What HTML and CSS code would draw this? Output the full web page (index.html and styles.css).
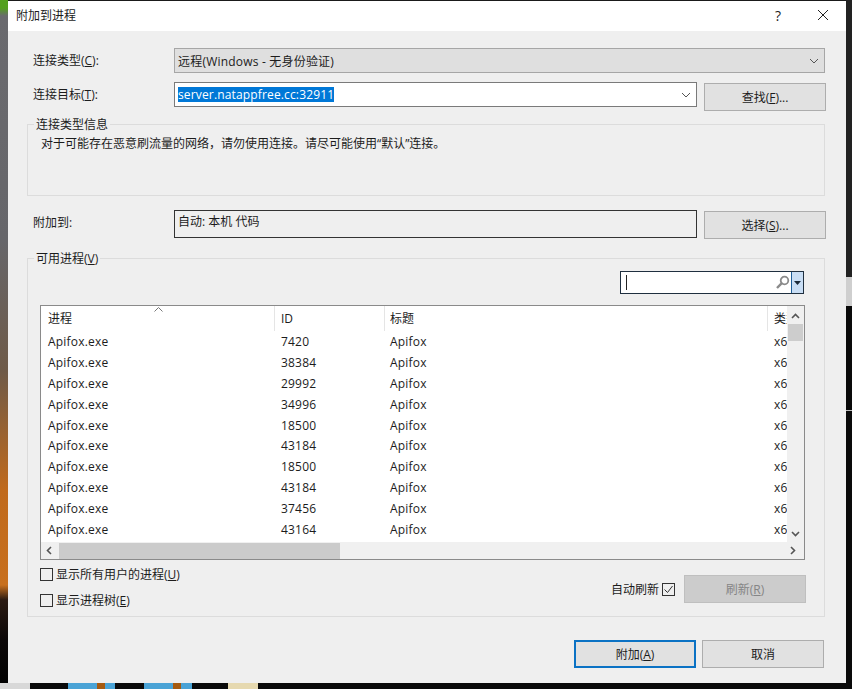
FILE: index.html
```html
<!DOCTYPE html>
<html>
  <head>
    <title>附加到进程</title>
    <link rel="stylesheet" href="styles.css">
  </head>
  <body>
    <div class="dialog">
      <div class="titlebar">
        <span class="title">附加到进程</span>
        <span class="help">?</span>
        <svg class="close" width="12" height="12" viewBox="0 0 12 12"><path d="M1 1l10 10M11 1L1 11" stroke="#222" fill="none"/></svg>
      </div>

      <div class="content">
        <div class="row row-first">
          <label class="row-label">连接类型(<u>C</u>):</label>
          <div class="combo">
            <span class="combo-text">远程(Windows - 无身份验证)</span>
            <svg width="10" height="6" viewBox="0 0 10 6"><path d="M1 1l4 4 4-4" stroke="#555" fill="none"/></svg>
          </div>
        </div>

        <div class="row row-target">
          <label class="row-label">连接目标(<u>T</u>):</label>
          <div class="target">
            <span class="selected">server.natappfree.cc:32911</span>
            <svg width="10" height="6" viewBox="0 0 10 6"><path d="M1 1l4 4 4-4" stroke="#555" fill="none"/></svg>
          </div>
          <button class="btn btn-side">查找(<u>F</u>)...</button>
        </div>

        <fieldset class="group group-info">
          <legend>连接类型信息</legend>
          <p class="info-text">对于可能存在恶意刷流量的网络，请勿使用连接。请尽可能使用“默认”连接。</p>
        </fieldset>

        <div class="row row-attach">
          <label class="row-label">附加到:</label>
          <div class="readonly">自动: 本机 代码</div>
          <button class="btn btn-side">选择(<u>S</u>)...</button>
        </div>

        <fieldset class="group group-proc">
          <legend>可用进程(<u>V</u>)</legend>
          <div class="proc-inner">
            <div class="search-row">
              <div class="search">
                <span class="caret"></span>
                <svg class="search-icon" width="15" height="15" viewBox="0 0 15 15"><circle cx="9.5" cy="5.5" r="3.8" stroke="#8a8a8a" stroke-width="1.8" fill="none"/><path d="M6.8 8.2L2 13" stroke="#8a8a8a" stroke-width="2.4"/></svg>
                <span class="search-drop"><svg width="7" height="4" viewBox="0 0 7 4"><path d="M0 0h7L3.5 4z" fill="#1c2b3a"/></svg></span>
              </div>
            </div>

            <div class="list">
              <div class="list-top">
                <div class="table">
                  <div class="thead">
                    <svg class="sort" width="9" height="5" viewBox="0 0 9 5"><path d="M.5 4.5l4-4 4 4" stroke="#777" fill="none"/></svg>
                    <span class="th">进程</span><span class="th">ID</span><span class="th">标题</span><span class="th th-last">类型</span>
                  </div>
                  <div class="tr"><span>Apifox.exe</span><span>7420</span><span>Apifox</span><span>x64</span></div>
                  <div class="tr"><span>Apifox.exe</span><span>38384</span><span>Apifox</span><span>x64</span></div>
                  <div class="tr"><span>Apifox.exe</span><span>29992</span><span>Apifox</span><span>x64</span></div>
                  <div class="tr"><span>Apifox.exe</span><span>34996</span><span>Apifox</span><span>x64</span></div>
                  <div class="tr"><span>Apifox.exe</span><span>18500</span><span>Apifox</span><span>x64</span></div>
                  <div class="tr"><span>Apifox.exe</span><span>43184</span><span>Apifox</span><span>x64</span></div>
                  <div class="tr"><span>Apifox.exe</span><span>18500</span><span>Apifox</span><span>x64</span></div>
                  <div class="tr"><span>Apifox.exe</span><span>43184</span><span>Apifox</span><span>x64</span></div>
                  <div class="tr"><span>Apifox.exe</span><span>37456</span><span>Apifox</span><span>x64</span></div>
                  <div class="tr"><span>Apifox.exe</span><span>43164</span><span>Apifox</span><span>x64</span></div>
                </div>
                <div class="vscroll">
                  <svg width="9" height="6" viewBox="0 0 9 6"><path d="M1 5l3.5-3.5L8 5" stroke="#555" stroke-width="1.6" fill="none"/></svg>
                  <div class="vthumb"></div>
                  <svg class="vdown" width="9" height="6" viewBox="0 0 9 6"><path d="M1 1l3.5 3.5L8 1" stroke="#555" stroke-width="1.6" fill="none"/></svg>
                </div>
              </div>
              <div class="hscroll">
                <svg width="6" height="9" viewBox="0 0 6 9"><path d="M5 1L1.5 4.5 5 8" stroke="#555" stroke-width="1.6" fill="none"/></svg>
                <div class="hthumb"></div>
                <svg class="hright" width="6" height="9" viewBox="0 0 6 9"><path d="M1 1l3.5 3.5L1 8" stroke="#555" stroke-width="1.6" fill="none"/></svg>
              </div>
            </div>

            <div class="proc-footer">
              <div class="checks">
                <label class="check"><span class="box"></span><span>显示所有用户的进程(<u>U</u>)</span></label>
                <label class="check"><span class="box"></span><span>显示进程树(<u>E</u>)</span></label>
              </div>
              <div class="refresh">
                <span>自动刷新</span>
                <span class="box"><svg width="11" height="11" viewBox="0 0 11 11"><path d="M1.5 5.5l3 3 5-6.5" stroke="#333" fill="none"/></svg></span>
                <button class="btn btn-disabled">刷新(<u>R</u>)</button>
              </div>
            </div>
          </div>
        </fieldset>

        <div class="actions">
          <button class="btn btn-primary">附加(<u>A</u>)</button>
          <button class="btn">取消</button>
        </div>
      </div>
    </div>
  </body>
</html>
```

FILE: styles.css
```css
html,
body {
  height: 100%;
}

body {
  margin: 0;
  padding: 1px 0 0 8px;
  box-sizing: border-box;
  overflow: hidden;
  font-family: "Open Sans", "Noto Sans CJK SC", sans-serif;
  font-size: 12px;
  color: #1c1c1c;
  background-color: #0a0a0a;
  background-image:
    linear-gradient(#a55a10, #a55a10),
    linear-gradient(#4aa3d6, #4aa3d6),
    linear-gradient(#a55a10, #a55a10),
    linear-gradient(#4aa3d6, #4aa3d6),
    linear-gradient(#e6d9b0, #e6d9b0),
    linear-gradient(#d8d8d8, #d8d8d8),
    linear-gradient(#cfcfcf, #cfcfcf),
    linear-gradient(#bbb, #bbb),
    linear-gradient(#222, #222),
    linear-gradient(#53a01e 0, #53a01e 8px, #6a6a6e 16px, #66666a 240px, #6e5a48 370px, #c06a1c 490px, #c8701e 585px, #2a1a12 600px, #0c0808 640px, #000 689px);
  background-repeat: no-repeat;
  background-size:
    8px 6px,
    47px 6px,
    8px 6px,
    48px 6px,
    30px 6px,
    30px 6px,
    6px 29px,
    6px 1px,
    6px 277px,
    8px 683px;
  background-position:
    97px 683px,
    68px 683px,
    173px 683px,
    144px 683px,
    228px 683px,
    0 683px,
    846px 277px,
    846px 410px,
    846px 0,
    0 0;
}

u {
  text-underline-offset: 1px;
}

.dialog {
  width: 838px;
  height: 682px;
  background-color: #efefef;
  box-sizing: border-box;
  box-shadow: 0 -1px 0 #1a1a1a;
}

.titlebar {
  height: 30px;
  background-color: #fff;
  display: flex;
  align-items: center;
  padding: 0 0 2px 8px;
  box-sizing: border-box;
}

.title {
  flex: 1;
}

.help {
  font-size: 14px;
  margin-right: 36px;
}

.close {
  margin-right: 17px;
}

.content {
  padding: 0 20px 0 19px;
}

.row {
  display: flex;
  align-items: flex-start;
}

.row-first {
  margin-top: 17px;
}

.row-target {
  margin-top: 9px;
}

.row-attach {
  margin-top: 14px;
}

.row-label {
  width: 147px;
  height: 25px;
  line-height: 25px;
  padding-left: 6px;
  box-sizing: border-box;
  flex-shrink: 0;
}

.combo,
.target {
  height: 25px;
  box-sizing: border-box;
  display: flex;
  align-items: center;
  justify-content: space-between;
  padding: 0 5px 0 3px;
}

.combo {
  width: 651px;
  background-color: #dfdfdf;
  border: 1px solid #a6a6a6;
}

.combo-text {
  letter-spacing: 0.2px;
}

.target {
  width: 523px;
  background-color: #fff;
  border: 1px solid #7a7a7a;
  margin-right: 7px;
}

.selected {
  background-color: #0078d7;
  color: #fff;
  line-height: 15px;
  letter-spacing: 0.15px;
}

.readonly {
  width: 523px;
  height: 28px;
  box-sizing: border-box;
  border: 1px solid #333;
  padding: 1px 3px;
  margin-right: 7px;
}

.btn {
  width: 122px;
  height: 28px;
  padding: 0;
  font: inherit;
  color: #1c1c1c;
  background-color: #e1e1e1;
  border: 1px solid #adadad;
}

.btn-side {
  margin-top: 1px;
}

.btn-primary {
  border: 2px solid #0b72c4;
}

.btn-disabled {
  background-color: #ccc;
  border-color: #bfbfbf;
  color: #858585;
}

.group {
  margin: 0;
  padding: 0;
  width: 798px;
  box-sizing: border-box;
  border: 1px solid #dcdcdc;
  min-width: 0;
}

.group legend {
  margin-left: 6px;
  padding: 2px 2px 0;
  line-height: 16px;
}

.group-info {
  margin-top: 4px;
  height: 81px;
}

.info-text {
  margin: 3px 0 0 13px;
  line-height: 16px;
}

.group-proc {
  margin-top: 10px;
  height: 368px;
}

.proc-inner {
  padding: 4px 20px 0 12px;
}

.search-row {
  display: flex;
  justify-content: flex-end;
}

.search {
  width: 184px;
  height: 23px;
  box-sizing: border-box;
  border: 1px solid #1f2f3f;
  background-color: #fff;
  display: flex;
  align-items: center;
  padding-left: 5px;
}

.caret {
  width: 1px;
  height: 15px;
  background-color: #222;
  flex: 1;
  max-width: 1px;
}

.search-icon {
  margin-left: auto;
}

.search-drop {
  width: 12px;
  height: 100%;
  box-sizing: border-box;
  margin-left: 1px;
  background-color: #c9def5;
  border-left: 1px solid #1f5f99;
  display: flex;
  align-items: center;
  justify-content: center;
}

.list {
  margin-top: 11px;
  width: 765px;
  height: 255px;
  box-sizing: border-box;
  border: 1px solid #8a8a8a;
  background-color: #f0f0f0;
}

.list-top {
  display: flex;
  height: 236px;
}

.table {
  position: relative;
  width: 746px;
  background-color: #fff;
  overflow: hidden;
}

.sort {
  position: absolute;
  left: 113px;
  top: 1px;
}

.thead,
.tr {
  display: grid;
  grid-template-columns: 234px 110px 383px 40px;
  white-space: nowrap;
}

.thead {
  height: 25.4px;
  align-items: start;
}

.th {
  height: 25px;
  line-height: 25px;
  padding-left: 7px;
  border-right: 1px solid #e5e5e5;
  box-sizing: border-box;
}

.th:nth-of-type(2) {
  padding-left: 6px;
}

.th:nth-of-type(3) {
  padding-left: 5px;
}

.th-last {
  border-right: 0;
  padding-left: 6px;
}

.tr {
  height: 20.8px;
  line-height: 22.8px;
  letter-spacing: 0.2px;
}

.tr span {
  padding-left: 7px;
}

.tr span:nth-child(2) {
  padding-left: 6px;
}

.tr span:nth-child(3) {
  padding-left: 5px;
}

.tr span:last-child {
  padding-left: 6px;
}

.vscroll {
  width: 16px;
  display: flex;
  flex-direction: column;
  align-items: center;
  padding-top: 7px;
  box-sizing: border-box;
}

.vthumb {
  width: 15px;
  height: 17px;
  margin-top: 5px;
  background-color: #cdcdcd;
}

.vdown {
  margin-top: auto;
  margin-bottom: 5px;
}

.hscroll {
  display: flex;
  align-items: center;
  height: 17px;
  width: 746px;
  padding-left: 5px;
  box-sizing: border-box;
}

.hthumb {
  width: 281px;
  height: 16px;
  margin-left: 7px;
  background-color: #cbcbcb;
}

.hright {
  margin-left: auto;
  margin-right: -9px;
}

.proc-footer {
  display: flex;
  justify-content: space-between;
  align-items: flex-start;
  margin-right: -2px;
}

.checks {
  display: flex;
  flex-direction: column;
  gap: 10px;
  margin-top: 6px;
}

.check {
  display: flex;
  align-items: center;
  gap: 3px;
  height: 16px;
}

.box {
  width: 13px;
  height: 13px;
  box-sizing: border-box;
  border: 1px solid #333;
  background-color: #efefef;
  display: inline-flex;
}

.refresh {
  display: flex;
  align-items: center;
  margin-top: 15px;
  gap: 3px;
}

.refresh .btn {
  margin-left: 6px;
}

.actions {
  display: flex;
  justify-content: flex-end;
  gap: 6px;
  margin-top: 23px;
  padding-right: 2px;
}
```
